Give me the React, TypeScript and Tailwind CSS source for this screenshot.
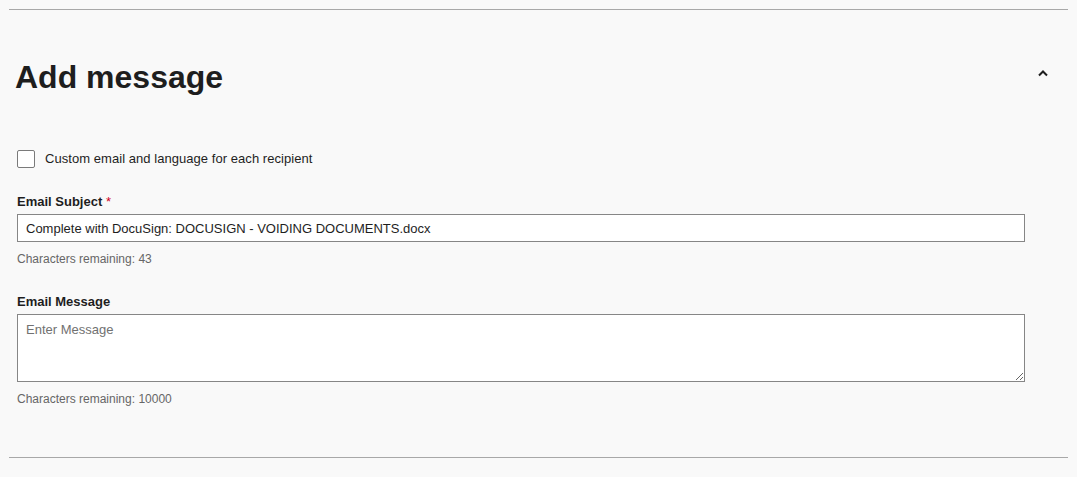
export default function App() {
  return (
    <div className="min-h-[477px] bg-[#f9f9f9] pt-[9px] text-[#1e1e1e] [font-family:'Liberation_Sans',Arial,sans-serif]">
      <div className="mx-[9px] border-t border-[#a8a8a8]" />

      <section className="mx-[9px]">
        <div className="mt-[47px] flex items-center justify-between pl-[6px] pr-[20px]">
          <h2 className="text-[32px] font-bold leading-[40px]">Add message</h2>
          <button className="mb-[8px] text-[#1e1e1e]" aria-label="Collapse">
            <svg width="10" height="8" viewBox="0 0 10 8">
              <path d="M1 6.5 L5 2.5 L9 6.5" fill="none" stroke="currentColor" strokeWidth="2" />
            </svg>
          </button>
        </div>

        <div className="pl-[8px]">
          <label className="mt-[53px] flex items-center gap-[10px] text-[13px] leading-[18px]">
            <span className="h-[18px] w-[18px] rounded-[2px] border border-[#7a7a7a] bg-white" />
            <span className="tracking-[0.05px]">Custom email and language for each recipient</span>
          </label>

          <div className="mt-[26px] text-[13px] font-bold leading-[16px]">
            Email Subject <span className="font-normal text-[#d0021b]">*</span>
          </div>
          <input
            className="mt-[4px] h-[28px] w-[1008px] border border-[#868686] bg-white pl-[8px] text-[13px] text-[#1e1e1e] outline-none"
            defaultValue="Complete with DocuSign: DOCUSIGN - VOIDING DOCUMENTS.docx"
          />
          <div className="mt-[9px] text-[12px] leading-[16px] text-[#666666]">Characters remaining: 43</div>

          <div className="mt-[27px] text-[13px] font-bold leading-[16px]">Email Message</div>
          <textarea
            className="mt-[4px] block h-[68px] w-[1008px] border border-[#868686] bg-white px-[8px] pt-[7px] text-[13px] leading-[16px] outline-none placeholder:text-[#717171]"
            placeholder="Enter Message"
          />
          <div className="mt-[9px] text-[12px] leading-[16px] text-[#666666]">Characters remaining: 10000</div>
        </div>
      </section>

      <div className="mx-[9px] mt-[50px] border-t border-[#a8a8a8]" />
    </div>
  )
}
